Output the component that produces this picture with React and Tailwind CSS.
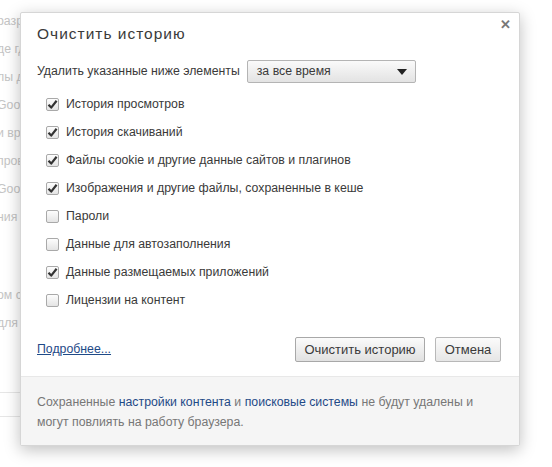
import React from "react";

const items = [
  { label: "История просмотров", checked: true },
  { label: "История скачиваний", checked: true },
  { label: "Файлы cookie и другие данные сайтов и плагинов", checked: true },
  { label: "Изображения и другие файлы, сохраненные в кеше", checked: true },
  { label: "Пароли", checked: false },
  { label: "Данные для автозаполнения", checked: false },
  { label: "Данные размещаемых приложений", checked: true },
  { label: "Лицензии на контент", checked: false },
];

const bgRows = [
  { text: "разрешить", top: 12 },
  { text: "де где", top: 40 },
  { text: "лы для", top: 68 },
  { text: "Google", top: 96 },
  { text: "и время", top: 124 },
  { text: "проверка", top: 152 },
  { text: "Google", top: 180 },
  { text: "ния", top: 208 },
  { text: "ом с", top: 286 },
  { text: "для", top: 314 },
];

const Checkbox = ({ checked }) => (
  <div className="w-[13px] h-[13px] rounded-[2px] border border-[#a9a9a9] bg-gradient-to-b from-[#fdfdfd] to-[#e4e4e4] flex items-center justify-center shrink-0">
    {checked && (
      <svg width="11" height="11" viewBox="0 0 11 11">
        <path d="M1.5 5.8 L4.2 8.6 L9.6 1.8" fill="none" stroke="#333" strokeWidth="2.2" strokeLinejoin="round" />
      </svg>
    )}
  </div>
);

const App = () => {
  return (
    <div className="relative w-[552px] h-[467px] overflow-hidden bg-white" style={{ fontFamily: '"Liberation Sans", Arial, sans-serif' }}>
      {/* page behind the dialog */}
      <div className="absolute inset-0 text-[12.3px] text-[#c4c4c4]">
        {bgRows.map((r, i) => (
          <div key={i} className="absolute left-[-3px]" style={{ top: r.top }}>
            {r.text}
          </div>
        ))}
        <div className="absolute left-0 top-[392px] w-[40px] border-t border-[#e6e6e6]" />
        <div className="absolute left-0 top-[416px] w-[40px] border-t border-[#e6e6e6]" />
      </div>

      {/* dialog */}
      <div className="absolute left-[20px] top-[12px] w-[500px] bg-white rounded-[2px] border border-[#d6d6d6] shadow-[0_4px_16px_rgba(0,0,0,0.25)] flex flex-col">
        <div className="relative px-[16px] pt-[10px]">
          <div className="text-[15.5px] tracking-[1px] text-[#3a3a3a] leading-[22px]">Очистить историю</div>
          <button className="absolute right-[8px] top-[5px] text-[#777] text-[13px] font-bold leading-none">✕</button>

          <div className="mt-[15px] flex items-center gap-[7px] text-[12.3px] text-[#3a3a3a]">
            <span>Удалить указанные ниже элементы</span>
            <div className="w-[169px] h-[23px] border border-[#b4b4b4] rounded-[2px] bg-gradient-to-b from-[#fafafa] to-[#e3e3e3] flex items-center justify-between pl-[9px] pr-[8px]">
              <span>за все время</span>
              <svg width="10" height="6" viewBox="0 0 10 6">
                <path d="M0 0 H10 L5 6 Z" fill="#222" />
              </svg>
            </div>
          </div>

          <div className="mt-[7px] ml-[9px] flex flex-col">
            {items.map((it, i) => (
              <div key={i} className="h-[28px] flex items-center gap-[7px] text-[12.3px] text-[#3a3a3a]">
                <Checkbox checked={it.checked} />
                <span>{it.label}</span>
              </div>
            ))}
          </div>

          <div className="mt-[23px] mb-[14px] flex items-center justify-between">
            <a className="text-[12.3px] text-[#1f4a87] underline">Подробнее...</a>
            <div className="flex gap-[10px] mr-[2px]">
              <button className="h-[25px] w-[130px] text-[13px] text-[#3a3a3a] border border-[#a8a8a8] rounded-[2px] bg-gradient-to-b from-[#fbfbfb] to-[#e1e1e1]">
                Очистить историю
              </button>
              <button className="h-[25px] w-[66px] text-[13px] text-[#3a3a3a] border border-[#b8b8b8] rounded-[2px] bg-gradient-to-b from-[#fbfbfb] to-[#e6e6e6]">
                Отмена
              </button>
            </div>
          </div>
        </div>

        <div className="bg-[#f5f5f5] border-t border-[#e8e8e8] px-[16px] pt-[15px] pb-[13px] text-[12.3px] leading-[20px] text-[#777]">
          Сохраненные <span className="text-[#1f4a87]">настройки контента</span> и{" "}
          <span className="text-[#1f4a87]">поисковые системы</span> не будут удалены и могут повлиять на работу браузера.
        </div>
      </div>
    </div>
  );
};

export default App;
